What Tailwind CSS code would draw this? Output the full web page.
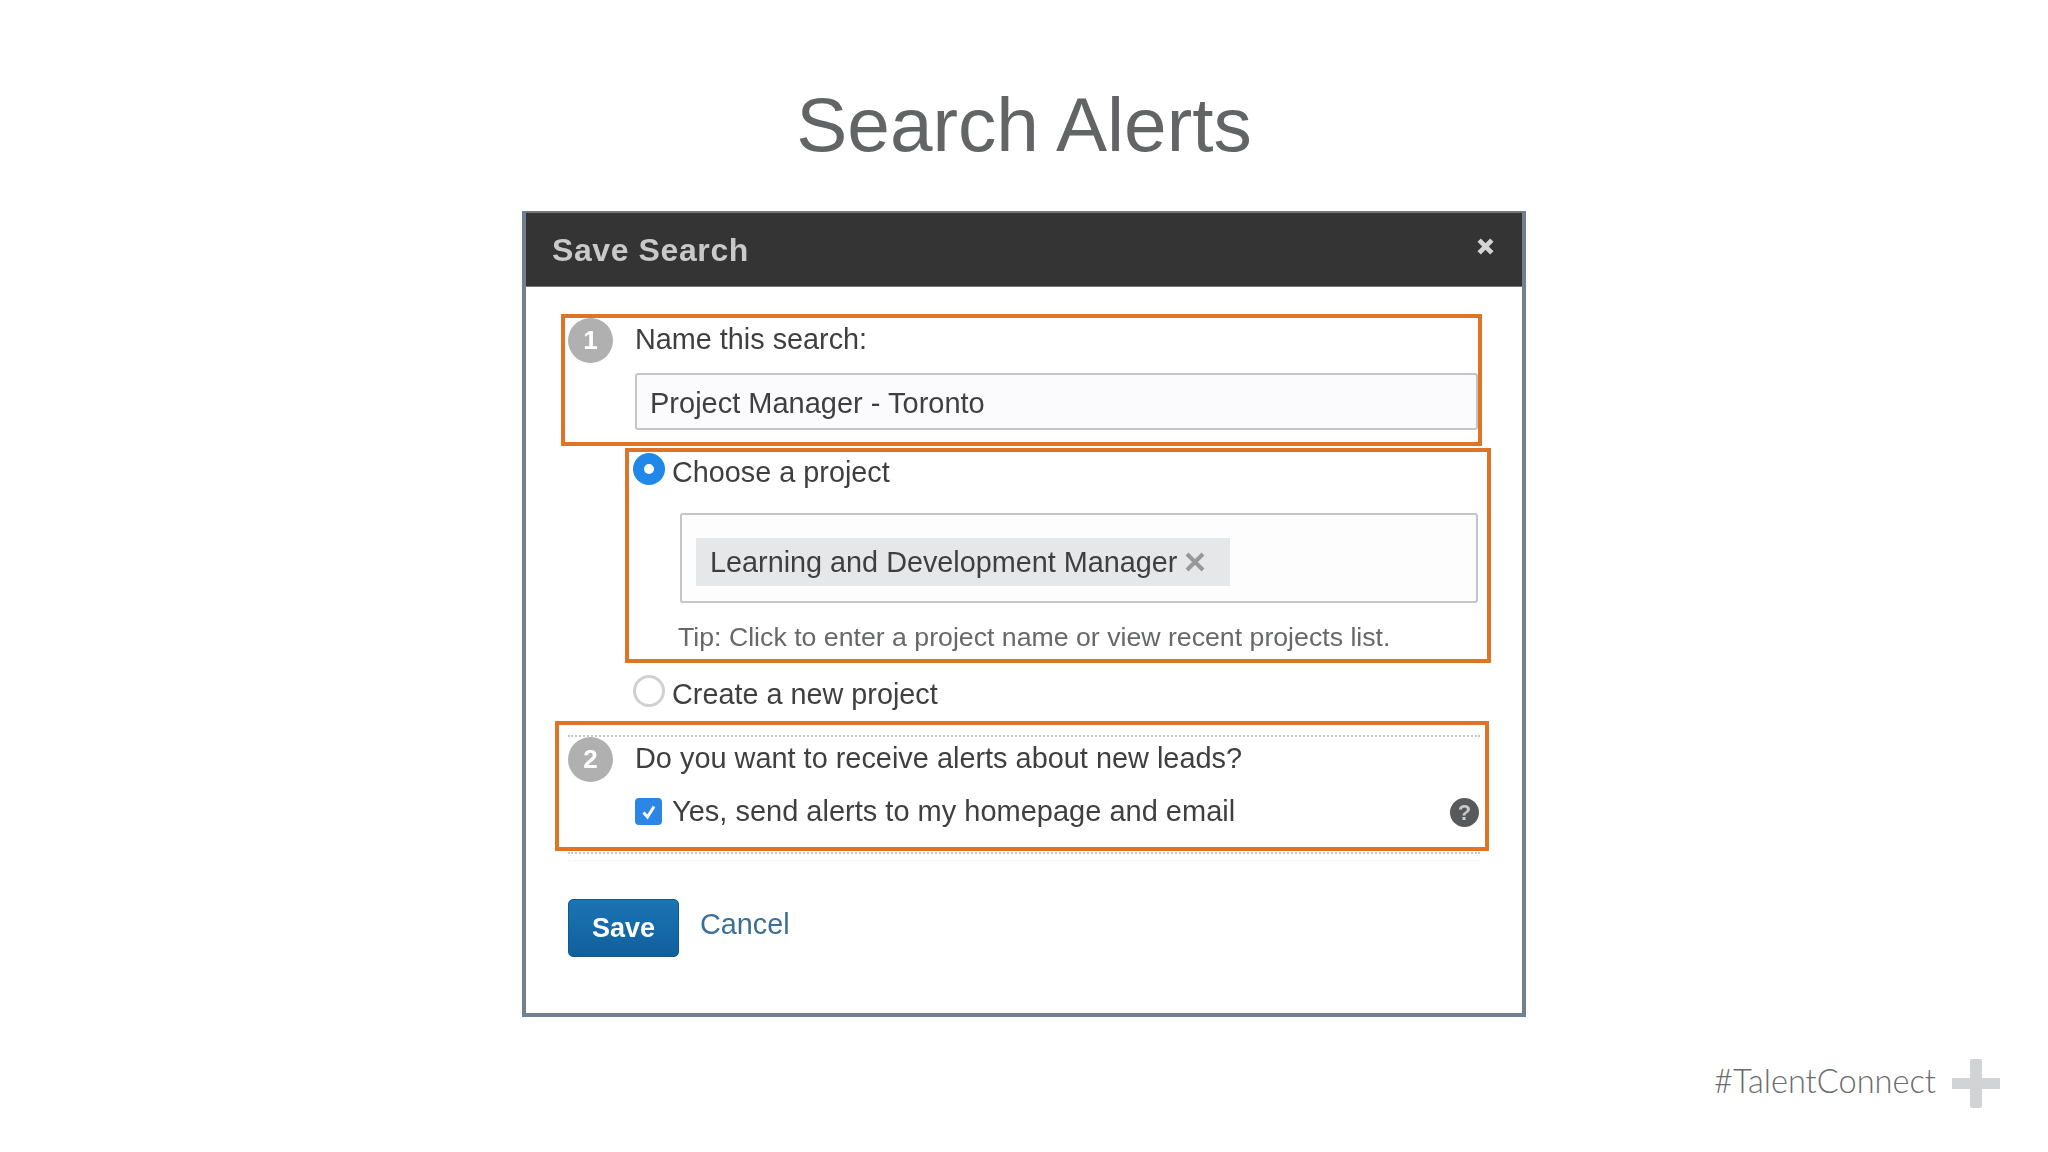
<!DOCTYPE html>
<html lang="en">
<head>
    <meta charset="UTF-8">
    <title>Search Alerts</title>
    <script src="https://cdn.jsdelivr.net/npm/@tailwindcss/browser@4"></script>
</head>
<body class="bg-white font-['Liberation_Sans',Arial,sans-serif]">
    <div class="w-[2048px] h-[1152px] flex flex-col items-center overflow-hidden">
        <h1 class="h-[211px] pt-[80px] text-[76.6px] leading-[90px] font-normal text-[#636466]">Search Alerts</h1>

        <!-- Dialog -->
        <div class="relative w-[1004px] h-[806px] border-x-4 border-b-4 border-[#6f8091] bg-white blur-[0.4px]">
            <div class="h-[76px] bg-[#343435] border-t-2 border-[#77787a] border-b border-b-[#77787a] flex justify-between pl-[26px] pr-[27px]">
                <span class="text-[32px] leading-[75px] font-bold tracking-[0.6px] text-[#c9c9c9]">Save Search</span>
                <svg class="mt-[24px] w-[19px] h-[19px]" viewBox="0 0 18 18"><path d="M3 3 15 15M15 3 3 15" stroke="#d4d4d4" stroke-width="4.5"/></svg>
            </div>

            <div class="pl-[42px] pr-[42px] text-[28.8px] text-[#3f3f41]">
                <!-- Step 1 -->
                <div class="flex items-start mt-[32px] h-[42px]">
                    <div class="w-[45px] h-[45px] rounded-full bg-[#b0b0b1] text-white font-bold text-[26px] leading-[45px] text-center -mt-[1px]">1</div>
                    <span class="ml-[22px] mt-[1px] leading-[38px]">Name this search:</span>
                </div>
                <div class="ml-[67px] mr-[2px] mt-[12px] h-[57px] border-2 border-[#c4c5c8] rounded-[3px] bg-[#fbfbfd] pl-[13px] text-[29px] leading-[56px]">Project Manager - Toronto</div>

                <!-- Project choice -->
                <div class="ml-[65px] mt-[23px] flex items-start h-[38px]">
                    <div class="w-[32px] h-[32px] rounded-full bg-[#2088e8] flex items-center justify-center"><div class="w-[10px] h-[10px] rounded-full bg-white"></div></div>
                    <span class="ml-[7px] leading-[38px]">Choose a project</span>
                </div>
                <div class="ml-[112px] mr-[2px] mt-[22px] h-[90px] border-2 border-[#c4c5c8] rounded-[3px] bg-[#fdfdfd] flex items-center pl-[14px]">
                    <div class="w-[534px] h-[48px] mt-[7px] bg-[#e6e7e8] flex items-center pl-[14px]">
                        <span class="leading-[50px]">Learning and Development Manager</span>
                        <svg class="ml-[7px] w-[22px] h-[22px]" viewBox="0 0 22 22"><path d="M3 3 19 19M19 3 3 19" stroke="#98989a" stroke-width="4"/></svg>
                    </div>
                </div>
                <div class="ml-[110px] mt-[17px] text-[26.7px] leading-[34px] text-[#67686a] whitespace-nowrap">Tip: Click to enter a project name or view recent projects list.</div>
                <div class="ml-[65px] mt-[20px] flex items-start h-[38px]">
                    <div class="mt-[1px] w-[32px] h-[32px] rounded-full border-[3px] border-[#cfd0d0] bg-white"></div>
                    <span class="ml-[7px] mt-[1px] leading-[38px]">Create a new project</span>
                </div>

                <!-- Step 2 -->
                <div class="mt-[23px] border-t-2 border-dotted border-[#c6c6c8]"></div>
                <div class="flex items-start h-[43px]">
                    <div class="w-[45px] h-[45px] rounded-full bg-[#b0b0b1] text-white font-bold text-[26px] leading-[45px] text-center">2</div>
                    <span class="ml-[22px] text-[28.9px] leading-[40px] mt-[1px]">Do you want to receive alerts about new leads?</span>
                </div>
                <div class="ml-[67px] mr-[1px] mt-[11px] flex items-start h-[38px] relative">
                    <div class="mt-[7px] w-[27px] h-[27px] rounded-[4px] bg-[#2c86e6] flex items-center justify-center">
                        <svg class="w-[18px] h-[18px]" viewBox="0 0 18 18"><path d="M3.5 9.5 7.5 14 14 3.5" fill="none" stroke="#fff" stroke-width="3"/></svg>
                    </div>
                    <span class="ml-[10px] mt-[1px] text-[29px] leading-[39px]">Yes, send alerts to my homepage and email</span>
                    <div class="ml-auto mt-[7px] w-[29px] h-[29px] rounded-full bg-[#58595b] text-[#c9c9ca] font-bold text-[22px] leading-[29px] text-center">?</div>
                </div>
                <div class="mt-[23px] border-t-2 border-dotted border-[#c6c6c8]"></div>
                <div class="mt-[6px] border-t border-dotted border-[#eeeeee]"></div>

                <!-- Actions -->
                <div class="mt-[38px] flex items-start">
                    <button class="w-[111px] h-[58px] rounded-[5px] bg-gradient-to-b from-[#1b74b4] to-[#10609c] text-white font-bold text-[27px] border border-[#14598c]">Save</button>
                    <a class="ml-[21px] mt-[6px] text-[#3c6f95] leading-[38px]">Cancel</a>
                </div>
            </div>

            <!-- Orange callouts over the dialog -->
            <div class="absolute left-[35px] top-[103px] w-[921px] h-[132px] border-4 border-[#dd7426]"></div>
            <div class="absolute left-[99px] top-[237px] w-[866px] h-[215px] border-4 border-[#dd7426]"></div>
            <div class="absolute left-[29px] top-[510px] w-[934px] h-[130px] border-4 border-[#dd7426]"></div>
        </div>

        <!-- Footer tag -->
        <div class="w-full flex justify-end items-center pr-[48px] mt-[42px]">
            <span class="font-['Lato',sans-serif] font-light text-[32.6px] leading-[48px] -mt-[5px] text-[#6a6b6d]">#TalentConnect</span>
            <div class="relative ml-[16px] w-[48px] h-[49px]">
                <div class="absolute left-[18px] top-0 w-[12px] h-[49px] bg-[#d1d3d4] rounded-[2px]"></div>
                <div class="absolute left-0 top-[19px] w-[48px] h-[11px] bg-[#d1d3d4]"></div>
            </div>
        </div>
    </div>
</body>
</html>
